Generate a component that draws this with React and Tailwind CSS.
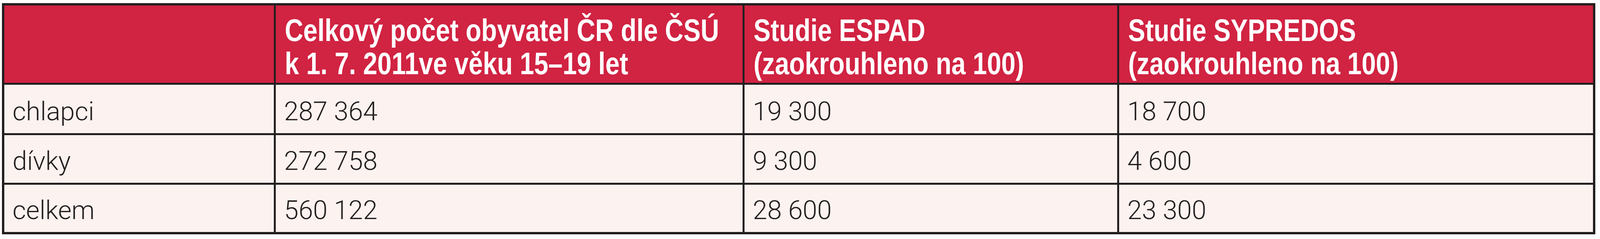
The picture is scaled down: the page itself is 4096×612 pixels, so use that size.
import React from "react";

const headers = [
  [],
  ["Celkový počet obyvatel ČR dle ČSÚ", "k 1. 7. 2011ve věku 15–19 let"],
  ["Studie ESPAD", "(zaokrouhleno na 100)"],
  ["Studie SYPREDOS", "(zaokrouhleno na 100)"],
];

const rows = [
  { cells: ["chlapci", "287 364", "19 300", "18 700"], pt: "pt-[35px]" },
  { cells: ["dívky", "272 758", "9 300", "4 600"], pt: "pt-[33px]" },
  { cells: ["celkem", "560 122", "28 600", "23 300"], pt: "pt-[32px]" },
];

export default function App() {
  return (
    <div className="w-[4096px] h-[612px] bg-white pt-[8px] pl-[5px]">
      <div className="grid w-max grid-cols-[690px_1195px_954px_1213px] grid-rows-[198px_124px_122px_121px] gap-[5px] bg-[#231f20] p-[6px]">
        {headers.map((lines, i) => (
          <div
            key={"h" + i}
            className="bg-[#d12342] pl-[23px] pt-[21px] overflow-hidden text-white font-bold text-[80px] leading-[85px] font-['Liberation_Sans',sans-serif] whitespace-nowrap"
          >
            <div className="origin-left scale-x-[0.82]">
              {lines.map((l, j) => (
                <div key={j}>{l}</div>
              ))}
            </div>
          </div>
        ))}
        {rows.map((r, ri) =>
          r.cells.map((c, ci) => (
            <div
              key={"r" + ri + "c" + ci}
              className={
                "bg-[#fcf2ef] pl-[21px] text-[67px] leading-[67px] font-light text-[#231f20] font-['Roboto',sans-serif] whitespace-nowrap " +
                r.pt
              }
            >
              {c}
            </div>
          ))
        )}
      </div>
    </div>
  );
}
